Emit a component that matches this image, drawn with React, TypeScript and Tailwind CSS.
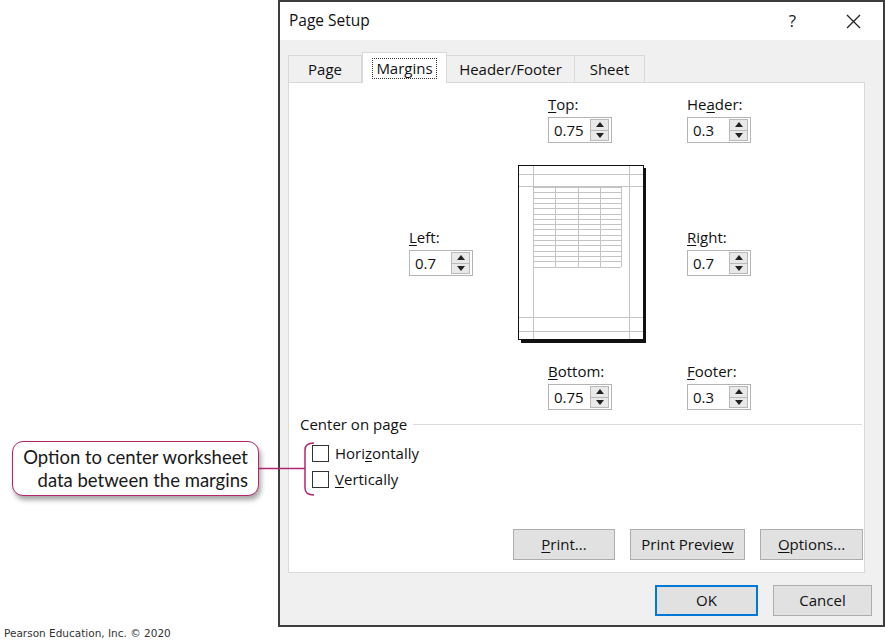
import React from "react"

const ui = { fontFamily: '"Open Sans", "Noto Sans", sans-serif' }

function Spin({ value }: { value: string }) {
  return (
    <div className="flex h-[26px] w-[64px] items-center border border-[#b4b4b4] bg-white pl-[5px] pr-[2px]">
      <span className="flex-1 text-[15px] leading-none text-[#111]">{value}</span>
      <div className="flex h-[22px] w-[19px] flex-col border border-[#b9b9b9] bg-[#e9e9e9]">
        <div className="flex flex-1 items-center justify-center border-b border-[#b9b9b9]">
          <svg width="8" height="5" viewBox="0 0 8 5"><path d="M0 5 L4 0 L8 5 Z" fill="#222" /></svg>
        </div>
        <div className="flex flex-1 items-center justify-center">
          <svg width="8" height="5" viewBox="0 0 8 5"><path d="M0 0 L4 5 L8 0 Z" fill="#222" /></svg>
        </div>
      </div>
    </div>
  )
}

function Field({ pre, key1, post, value }: { pre: string; key1: string; post: string; value: string }) {
  return (
    <div className="flex flex-col">
      <div className="h-[21px] text-[15px] leading-[16px] text-[#111]">
        {pre}
        <span className="underline underline-offset-2">{key1}</span>
        {post}
      </div>
      <Spin value={value} />
    </div>
  )
}

function Preview() {
  const rows = Array.from({ length: 16 }, (_, i) => 188 - 166 + i * 5.3)
  return (
    <svg width="128" height="178" viewBox="0 0 128 178">
      <rect x="3" y="3" width="125" height="175" fill="#111" />
      <rect x="0.5" y="0.5" width="125" height="174" fill="#fff" stroke="#111" />
      <g stroke="#c4c4c4" strokeWidth="1">
        <line x1="15.5" y1="1" x2="15.5" y2="174" />
        <line x1="111.5" y1="1" x2="111.5" y2="174" />
        <line x1="1" y1="9.5" x2="125" y2="9.5" />
        <line x1="1" y1="21.5" x2="125" y2="21.5" />
        <line x1="1" y1="152.5" x2="125" y2="152.5" />
        <line x1="1" y1="166.5" x2="125" y2="166.5" />
        {rows.map((y, i) => (
          <line key={i} x1="15.5" y1={Math.round(y) + 0.5} x2="103" y2={Math.round(y) + 0.5} />
        ))}
        <line x1="37.5" y1="22" x2="37.5" y2="102" />
        <line x1="60.5" y1="22" x2="60.5" y2="102" />
        <line x1="82.5" y1="22" x2="82.5" y2="102" />
        <line x1="103.5" y1="22" x2="103.5" y2="102" />
      </g>
    </svg>
  )
}

function Check({ pre, key1, post }: { pre: string; key1: string; post: string }) {
  return (
    <div className="flex h-[26px] items-center gap-[6px]">
      <div className="h-[17px] w-[17px] border border-[#333] bg-white" />
      <span className="text-[15px] text-[#111]">
        {pre}
        <span className="underline underline-offset-2">{key1}</span>
        {post}
      </span>
    </div>
  )
}

function Btn({ children, w, primary }: { children: React.ReactNode; w: string; primary?: boolean }) {
  return (
    <div
      className={`flex h-[31px] items-center justify-center bg-[#e1e1e1] text-[15px] text-[#111] ${w} ${
        primary ? "border-2 border-[#0078d7]" : "border border-[#adadad]"
      }`}
    >
      {children}
    </div>
  )
}

export default function App() {
  return (
    <div className="relative flex h-[644px] w-[885px] overflow-hidden bg-white" style={ui}>
      {/* left gutter with credit line */}
      <div className="flex w-[278px] flex-col justify-end pb-[2px] pl-[4px]">
        <span className="text-[10.5px] text-[#333]" style={{ fontFamily: '"DejaVu Sans", Verdana, sans-serif' }}>
          Pearson Education, Inc. © 2020
        </span>
      </div>

      {/* dialog */}
      <div className="flex h-[627px] w-[607px] flex-col border-2 border-[#3d3d3d] bg-[#f0f0f0]">
        <div className="flex h-[38px] items-center bg-white pl-[9px] pr-[22px]">
          <span className="flex-1 text-[15.5px] text-[#111]">Page Setup</span>
          <span className="mr-[50px] text-[17px] text-[#222]">?</span>
          <svg width="15" height="15" viewBox="0 0 15 15">
            <path d="M1 1 L14 14 M14 1 L1 14" stroke="#222" strokeWidth="1.3" />
          </svg>
        </div>

        <div className="flex flex-1 flex-col pl-[8px] pr-[18px] pt-[12px]">
          {/* tabs */}
          <div className="flex items-end">
            <div className="flex h-[27px] w-[74px] items-center justify-center border border-b-0 border-[#d9d9d9] text-[15px] text-[#111]">
              Page
            </div>
            <div className="relative z-10 -mb-px flex h-[31px] w-[85px] items-center justify-center border border-b-0 border-[#d9d9d9] bg-white text-[15px] text-[#111]">
              <span className="border border-dotted border-[#333] px-[3px] leading-[19px]">Margins</span>
            </div>
            <div className="flex h-[27px] w-[128px] items-center justify-center border border-b-0 border-l-0 border-[#d9d9d9] text-[15px] text-[#111]">
              Header/Footer
            </div>
            <div className="flex h-[27px] w-[70px] items-center justify-center border border-b-0 border-l-0 border-[#d9d9d9] text-[15px] text-[#111]">
              Sheet
            </div>
          </div>

          {/* panel */}
          <div className="flex h-[491px] w-[577px] flex-col border border-[#d9d9d9] bg-white">
            <div className="grid grid-cols-[120px_109px_169px_80px] pt-[13px]">
              <div />
              <div />
              <div className="pl-[30px]">
                <Field pre="" key1="T" post="op:" value="0.75" />
              </div>
              <Field pre="He" key1="a" post="der:" value="0.3" />

              <div className="col-span-4 h-[22px]" />

              <div />
              <div className="pt-[64px]">
                <Field pre="" key1="L" post="eft:" value="0.7" />
              </div>
              <Preview />
              <div className="pt-[64px]">
                <Field pre="" key1="R" post="ight:" value="0.7" />
              </div>

              <div className="col-span-4 h-[20px]" />

              <div />
              <div />
              <div className="pl-[30px]">
                <Field pre="" key1="B" post="ottom:" value="0.75" />
              </div>
              <Field pre="" key1="F" post="ooter:" value="0.3" />
            </div>

            <div className="mt-[3px] flex items-center pl-[11px] pr-[2px]">
              <span className="text-[15px] text-[#111]">Center on page</span>
              <div className="ml-[6px] h-px flex-1 bg-[#dcdcdc]" />
            </div>
            <div className="mt-[5px] flex flex-col pl-[23px]">
              <Check pre="Hori" key1="z" post="ontally" />
              <Check pre="" key1="V" post="ertically" />
            </div>

            <div className="mt-auto mb-[12px] flex justify-end gap-[15px] pr-[1px]">
              <Btn w="w-[102px]">
                <span className="underline underline-offset-2">P</span>rint...
              </Btn>
              <Btn w="w-[115px]">
                Print Previe<span className="underline underline-offset-2">w</span>
              </Btn>
              <Btn w="w-[103px]">
                <span className="underline underline-offset-2">O</span>ptions...
              </Btn>
            </div>
          </div>

          <div className="mt-[12px] -mr-[7px] flex justify-end gap-[15px]">
            <Btn w="w-[103px]" primary>
              OK
            </Btn>
            <Btn w="w-[99px]">Cancel</Btn>
          </div>
        </div>
      </div>

      {/* annotation callout */}
      <div
        className="absolute left-[12px] top-[441px] flex h-[55px] w-[247px] flex-col items-end justify-center rounded-[11px] border-[1.5px] border-[#b3266f] bg-white pr-[10px] text-[18.5px] leading-[23px] text-[#1a1a1a] shadow-[2px_4px_5px_rgba(0,0,0,0.35)]"
        style={{ fontFamily: 'Lato, "Noto Sans", sans-serif' }}
      >
        <span>Option to center worksheet</span>
        <span>data between the margins</span>
      </div>
      <svg className="absolute left-[258px] top-[440px]" width="60" height="60" viewBox="0 0 60 60">
        <path d="M0 28.5 H47" stroke="#b3266f" strokeWidth="1.5" fill="none" />
        <path d="M56 3 Q47 3 47 10 V48 Q47 55 56 55" stroke="#b3266f" strokeWidth="1.5" fill="none" />
      </svg>
    </div>
  )
}
